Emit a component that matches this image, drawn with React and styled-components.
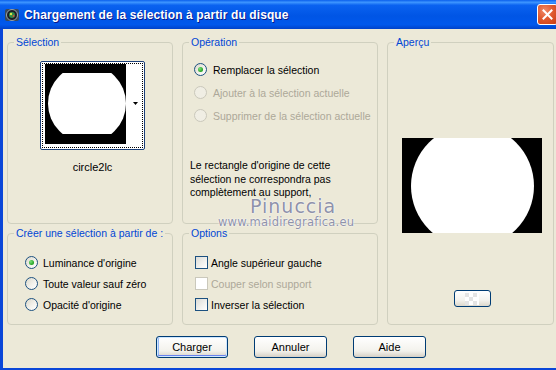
import React from 'react'
import styled, { createGlobalStyle } from 'styled-components'

const GlobalStyle = createGlobalStyle`
    body{
        margin: 0;
        background: #ece9d8;
        font-family: "Liberation Sans", Arial, sans-serif;
        font-size: 10.5px;
        color: #000;
    }
`

const Window = styled.div`
    width: 556px;
    height: 370px;
    display: flex;
    flex-direction: column;
    overflow: hidden;
`

const TitleBar = styled.div`
    height: 29px;
    flex: none;
    display: flex;
    align-items: center;
    padding-left: 4px;
    gap: 4px;
    background: linear-gradient(to bottom, #0a5fec 0%, #3d95ff 8%, #0a62f0 18%, #0055e5 55%, #0058ec 85%, #0042c9 100%);
`

const Title = styled.span`
    color: #fff;
    font-weight: bold;
    font-size: 12px;
    letter-spacing: 0.1px;
    text-shadow: 1px 1px #0a1a8a;
`

const CloseButton = styled.div`
    margin-left: auto;
    margin-right: -2px;
    width: 21px;
    height: 21px;
    box-sizing: border-box;
    border: 1px solid #fff;
    border-radius: 3px;
    background: radial-gradient(circle at 35% 30%, #f08a68 0%, #e05a30 45%, #c83a12 100%);
    display: flex;
    align-items: center;
    justify-content: center;
`

const Body = styled.div`
    flex: 1;
    background: #ece9d8;
    border-left: 3px solid #0a46d8;
    border-bottom: 2px solid #0a46d8;
    padding: 13px 0 0 4px;
`

const Panels = styled.div`
    display: grid;
    grid-template-columns: 166px 196px 167px;
    grid-template-rows: 182px 92px;
    column-gap: 9px;
    row-gap: 9px;
`

const Group = styled.div`
    position: relative;
    border: 1px solid #d0d0bf;
    border-radius: 4px;
    grid-column: ${p => p.$col};
    grid-row: ${p => p.$row};
    padding: ${p => p.$pad || '0'};
    display: flex;
    flex-direction: column;
    align-items: ${p => p.$center ? 'center' : 'stretch'};
`

const Legend = styled.span`
    position: absolute;
    top: -7px;
    left: 6px;
    padding: 0 2px;
    line-height: 13px;
    background: #ece9d8;
    color: #0046d5;
    white-space: nowrap;
`

const ThumbBox = styled.div`
    width: 101px;
    height: 85px;
    border: 1px solid #1c3f78;
    border-radius: 2px;
    padding: 1px;
    box-sizing: content-box;
    background: #fff;
    margin-left: 5px;
`

const FocusRing = styled.div`
    height: 100%;
    box-sizing: border-box;
    border: 1px dotted #000;
    display: flex;
`

const ThumbLabel = styled.div`
    margin-top: 11px;
    margin-left: 5px;
    line-height: 13px;
    font-size: 11px;
`

const Choice = styled.label`
    display: flex;
    align-items: center;
    white-space: nowrap;
    height: ${p => p.$h || 23}px;
    gap: ${p => p.$gap || 6}px;
    color: ${p => p.$disabled ? '#aca899' : '#000'};
    margin-left: ${p => p.$indent || 0}px;
`

const Radio = styled.span`
    width: 13px;
    height: 13px;
    box-sizing: border-box;
    border-radius: 50%;
    border: 1px solid ${p => p.$disabled ? '#cac8bb' : '#1c5180'};
    background: ${p => p.$disabled ? '#f0eee4' : 'linear-gradient(135deg, #dcd9cb 0%, #f4f3ee 60%, #fff 100%)'};
    display: flex;
    align-items: center;
    justify-content: center;
    flex: none;
    &::after{
        content: '';
        display: ${p => p.$checked ? 'block' : 'none'};
        width: 5px;
        height: 5px;
        border-radius: 50%;
        background: radial-gradient(circle at 35% 35%, #7be07b, #21a121 70%);
    }
`

const Check = styled.span`
    width: 13px;
    height: 13px;
    box-sizing: border-box;
    flex: none;
    border: 1px solid ${p => p.$disabled ? '#cac8bb' : '#1c5180'};
    background: ${p => p.$disabled ? '#fff' : 'linear-gradient(135deg, #dcdcd7 0%, #f2f2ef 60%, #fff 100%)'};
`

const Note = styled.p`
    margin: 32px 0 0 0;
    line-height: 13.5px;
    white-space: nowrap;
`

const Watermark = styled.div`
    position: absolute;
    left: ${p => p.$x}px;
    top: ${p => p.$y}px;
    font-family: "DejaVu Sans", sans-serif;
    font-size: ${p => p.$size}px;
    letter-spacing: ${p => p.$spacing || 0}px;
    color: #8f92aa;
    text-shadow: 0 0 2px #fff, 0 0 1px #fff;
    white-space: nowrap;
`

const Preview = styled.svg`
    margin-top: 95px;
    margin-left: 2px;
    display: block;
`

const ZoomButton = styled.div`
    margin-top: 57px;
    margin-left: 3px;
    width: 37px;
    height: 17px;
    box-sizing: border-box;
    border: 1px solid #003c74;
    border-radius: 3px;
    background: linear-gradient(to bottom, #fff 0%, #f4f3ee 60%, #dcd8cc 100%);
    display: flex;
    align-items: center;
    justify-content: center;
`

const ButtonRow = styled.div`
    display: flex;
    gap: 26px;
    margin-top: 11px;
    padding-left: 149px;
`

const Button = styled.button`
    width: ${p => p.$w || 73}px;
    height: 22px;
    box-sizing: border-box;
    border: 1px solid #003c74;
    border-radius: 3px;
    font-family: "Liberation Sans", Arial, sans-serif;
    font-size: 11px;
    font-weight: normal;
    color: #000;
    padding: 0;
    background: linear-gradient(to bottom, #fff 0%, #f3f2ec 70%, #d6d0c5 100%);
    box-shadow: ${p => p.$default ? 'inset 0 0 0 1px #cee7ff, inset 0 -1px 0 1px #6982ee, inset 1px 0 0 1px #97b9f7' : 'none'};
`

function TitleIcon() {
    return (
        <svg width="16" height="16" viewBox="0 0 16 16">
            <rect x="1" y="2" width="14" height="12" rx="2" fill="#3b4a5a" />
            <circle cx="8" cy="8" r="5.5" fill="#1a1f26" stroke="#9aa4ae" strokeWidth="1" />
            <circle cx="8" cy="8" r="3" fill="#2f8a4a" />
            <circle cx="7" cy="7" r="1.2" fill="#d8e84a" />
            <circle cx="9.5" cy="9" r="0.9" fill="#e04a3a" />
        </svg>
    )
}

function Thumbnail() {
    return (
        <svg width="97" height="81" viewBox="0 0 97 81">
            <defs>
                <clipPath id="thumbBand">
                    <rect x="0" y="9" width="83" height="61" />
                </clipPath>
            </defs>
            <rect x="2" y="0" width="81" height="80" fill="#000" />
            <circle cx="44" cy="39.5" r="39" fill="#fff" clipPath="url(#thumbBand)" />
            <polygon points="90,38 95,38 92.5,41" fill="#000" />
        </svg>
    )
}

function Option({ label, checked, disabled, box, h, gap, indent }) {
    return (
        <Choice $disabled={disabled} $h={h} $gap={gap} $indent={indent}>
            {box ? <Check $disabled={disabled} /> : <Radio $checked={checked} $disabled={disabled} />}
            <span>{label}</span>
        </Choice>
    )
}

export default function App() {
    return (
        <Window>
            <GlobalStyle />
            <TitleBar>
                <TitleIcon />
                <Title>Chargement de la sélection à partir du disque</Title>
                <CloseButton>
                    <svg width="11" height="11" viewBox="0 0 11 11">
                        <path d="M1.5 1.5 L9.5 9.5 M9.5 1.5 L1.5 9.5" stroke="#fff" strokeWidth="2" strokeLinecap="square" />
                    </svg>
                </CloseButton>
            </TitleBar>
            <Body>
                <Panels>
                    <Group $col={1} $row={1} $center $pad="18px 0 0 0">
                        <Legend>Sélection</Legend>
                        <ThumbBox>
                            <FocusRing>
                                <Thumbnail />
                            </FocusRing>
                        </ThumbBox>
                        <ThumbLabel>circle2lc</ThumbLabel>
                    </Group>

                    <Group $col={2} $row={1} $pad="15px 0 0 7px">
                        <Legend>Opération</Legend>
                        <Option label="Remplacer la sélection" checked indent={4} />
                        <Option label="Ajouter à la sélection actuelle" disabled indent={4} />
                        <Option label="Supprimer de la sélection actuelle" disabled indent={4} />
                        <Note>
                            Le rectangle d'origine de cette<br />
                            sélection ne correspondra pas<br />
                            complètement au support,
                        </Note>
                        <Watermark $x={67} $y={152} $size={19} $spacing={1}>Pinuccia</Watermark>
                        <Watermark $x={35} $y={172} $size={11.5} $spacing={0.2}>www.maidiregrafica.eu</Watermark>
                    </Group>

                    <Group $col={3} $row="1 / span 2" $center>
                        <Legend>Aperçu</Legend>
                        <Preview width="140" height="95" viewBox="0 0 140 95">
                            <rect width="140" height="95" fill="#000" />
                            <circle cx="70.5" cy="48" r="61.5" fill="#fff" />
                        </Preview>
                        <ZoomButton>
                            <svg width="14" height="12" viewBox="0 0 14 12">
                                <rect width="14" height="12" fill="#fff" />
                                <rect x="0" y="0" width="4" height="4" fill="#e4e4e4" />
                                <rect x="8" y="0" width="4" height="4" fill="#e4e4e4" />
                                <rect x="4" y="4" width="4" height="4" fill="#e4e4e4" />
                                <rect x="0" y="8" width="4" height="4" fill="#e4e4e4" />
                                <rect x="8" y="8" width="4" height="4" fill="#e4e4e4" />
                            </svg>
                        </ZoomButton>
                    </Group>

                    <Group $col={1} $row={2} $pad="18px 0 0 17px">
                        <Legend>Créer une sélection à partir de :</Legend>
                        <Option label="Luminance d'origine" checked h={21} gap={5} />
                        <Option label="Toute valeur sauf zéro" h={21} gap={5} />
                        <Option label="Opacité d'origine" h={21} gap={5} />
                    </Group>

                    <Group $col={2} $row={2} $pad="18px 0 0 12px">
                        <Legend>Options</Legend>
                        <Option label="Angle supérieur gauche" box h={21} gap={3} />
                        <Option label="Couper selon support" box disabled h={21} gap={3} />
                        <Option label="Inverser la sélection" box h={21} gap={3} />
                    </Group>
                </Panels>
                <ButtonRow>
                    <Button $default $w={72}>Charger</Button>
                    <Button>Annuler</Button>
                    <Button>Aide</Button>
                </ButtonRow>
            </Body>
        </Window>
    )
}
